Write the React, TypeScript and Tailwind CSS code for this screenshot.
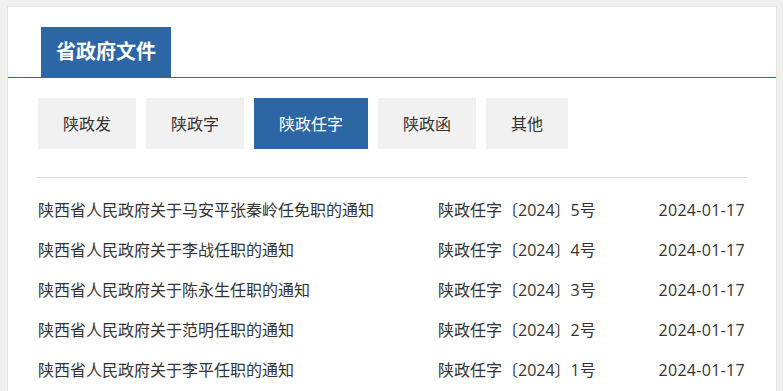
const tabs = ["陕政发", "陕政字", "陕政任字", "陕政函", "其他"];

const docs = [
  { title: "陕西省人民政府关于马安平张秦岭任免职的通知", no: "陕政任字〔2024〕5号", date: "2024-01-17" },
  { title: "陕西省人民政府关于李战任职的通知", no: "陕政任字〔2024〕4号", date: "2024-01-17" },
  { title: "陕西省人民政府关于陈永生任职的通知", no: "陕政任字〔2024〕3号", date: "2024-01-17" },
  { title: "陕西省人民政府关于范明任职的通知", no: "陕政任字〔2024〕2号", date: "2024-01-17" },
  { title: "陕西省人民政府关于李平任职的通知", no: "陕政任字〔2024〕1号", date: "2024-01-17" },
];

export default function App() {
  const active = 2;
  return (
    <div
      className="min-h-screen bg-[#f0f0f0] pt-[6px] pl-[7px] pr-[6px] text-[#333]"
      style={{ fontFamily: '"Open Sans", "Noto Sans CJK SC", sans-serif' }}
    >
      <div className="bg-white border border-[#e4e4e4] border-b-0 pt-[20px] pb-[20px]">
        {/* header */}
        <div className="border-b border-[#2c66a4]">
          <div className="ml-[33px] inline-flex h-[50px] items-center bg-[#2c66a4] px-[15px] text-[20px] font-bold text-white">
            省政府文件
          </div>
        </div>

        <div className="px-[30px]">
          {/* tabs */}
          <div className="mt-[20px] flex gap-[10px]">
            {tabs.map((t, i) => (
              <div
                key={t}
                className={
                  i === active
                    ? "flex h-[51px] items-center px-[25px] text-[16px] bg-[#2c66a4] text-white"
                    : "flex h-[51px] items-center px-[25px] text-[16px] bg-[#f1f1f1] text-[#333]"
                }
              >
                {t}
              </div>
            ))}
          </div>

          <div className="mt-[28px] border-t border-[#d9d9d9]" />

          {/* list */}
          <div className="mt-[12px]">
            {docs.map((d) => (
              <div key={d.no} className="grid h-[40px] grid-cols-[400px_1fr_auto] items-center text-[16px]">
                <span className="truncate">{d.title}</span>
                <span>{d.no}</span>
                <span className="pr-[1px] text-right tracking-[0.3px]">{d.date}</span>
              </div>
            ))}
          </div>
        </div>
      </div>
    </div>
  );
}
